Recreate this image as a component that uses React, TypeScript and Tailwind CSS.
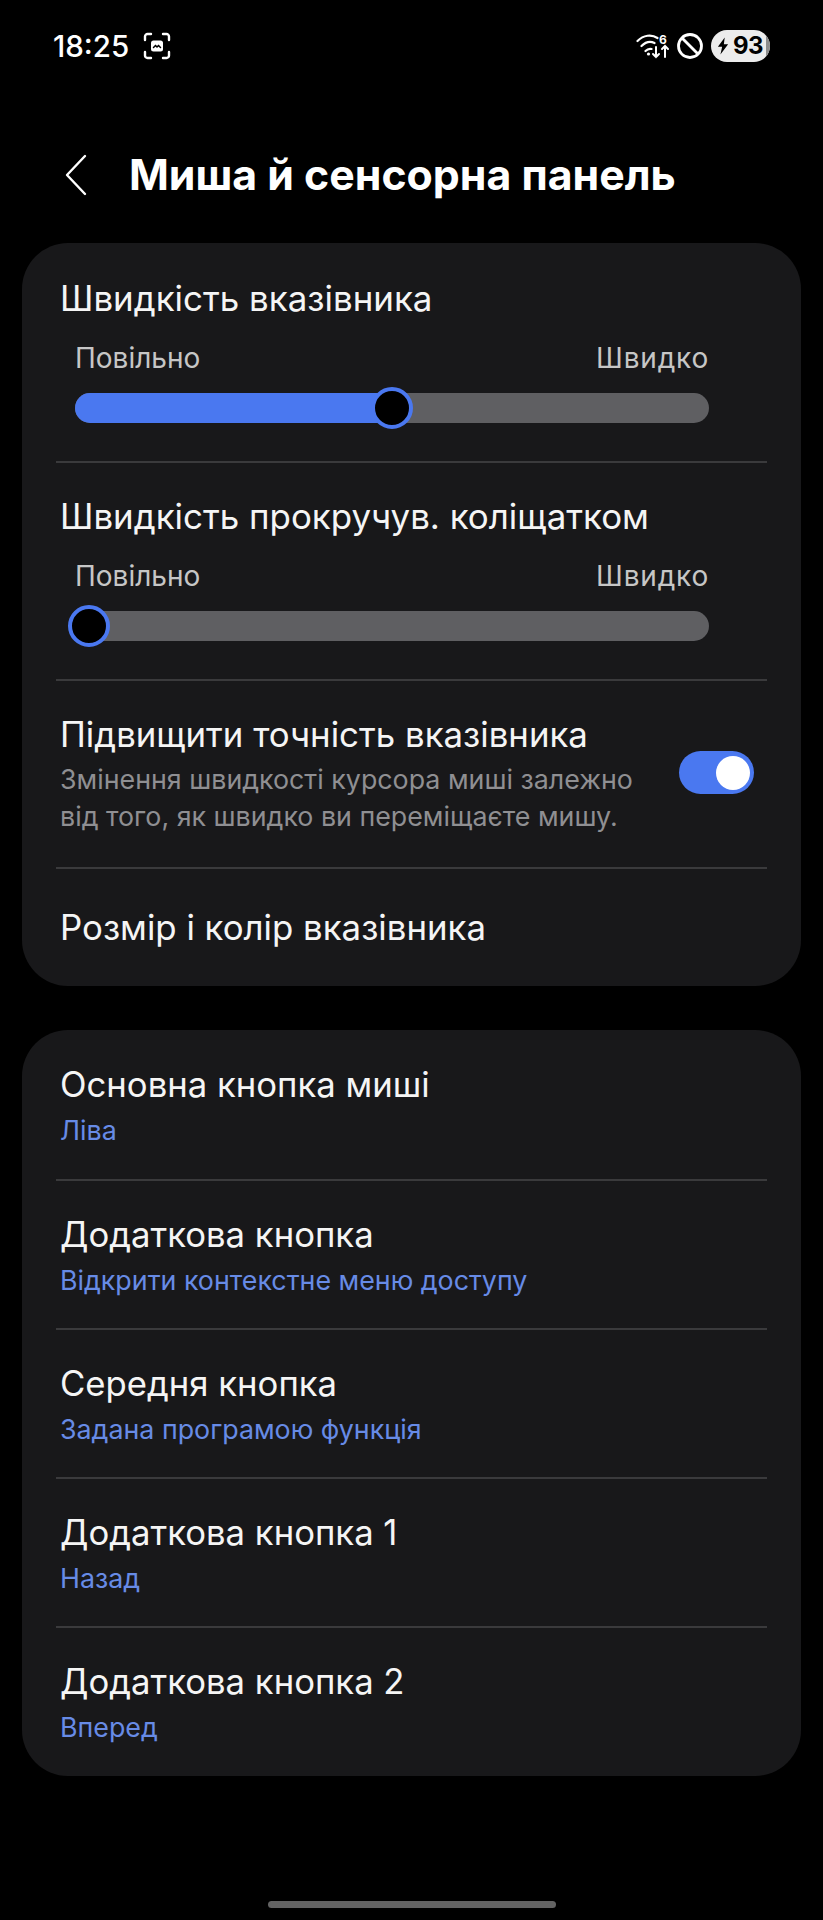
const sans = "font-['Inter','Liberation_Sans',sans-serif]";

function SliderRow({ title, percent, first }: { title: string; percent: number; first?: boolean }) {
  return (
    <div className={first ? "h-[218px] pt-[35px] pl-[38px]" : "h-[216px] pt-[33px] pl-[38px]"}>
      <div className="text-[34.9px] leading-[40px] text-[#f5f5f5]">{title}</div>
      <div className="mt-[22px] w-[649px] pl-[15px] flex justify-between text-[28px] leading-[36px] text-[#c6c6c6]">
        <span>Повільно</span>
        <span className="tracking-[0.8px]">Швидко</span>
      </div>
      <div className="relative mt-[17px] ml-[15px] w-[634px] h-[30px] rounded-full bg-[#5f5f62]">
        <div className="h-full rounded-full bg-[#4a78f0]" style={{ width: `${percent}%` }} />
        <div
          className="absolute top-[-6px] w-[42px] h-[42px] -ml-[21px] rounded-full bg-black border-[4px] border-[#4a78f0]"
          style={{ left: `${percent}%` }}
        />
      </div>
    </div>
  );
}

function Divider() {
  return <div className="mx-[34px] h-[2px] bg-[#3a3a3c]" />;
}

function ValueRow({ title, value, first }: { title: string; value: string; first?: boolean }) {
  return (
    <div className={first ? "h-[149px] px-[38px] pt-[34px]" : "h-[147px] px-[38px] pt-[33px]"}>
      <div className="text-[34.7px] leading-[40px] text-[#f5f5f5]">{title}</div>
      <div className={first ? "mt-[9px] text-[26.8px] leading-[34px] text-[#678be6]" : "mt-[9px] text-[26.8px] leading-[34px] text-[#678be6]"}>{value}</div>
    </div>
  );
}

export default function App() {
  return (
    <div className={`${sans} w-[823px] h-[1920px] bg-black overflow-hidden relative`}>
      <div className="h-[90px] pt-[28px] pl-[53px] pr-[53px] flex items-start justify-between text-white">
        <div className="flex items-center gap-[14px]">
          <span className="text-[29.5px] leading-[36px] font-medium">18:25</span>
          <svg width="28" height="28" viewBox="0 0 28 28" fill="none" stroke="white" strokeWidth="2.4" strokeLinecap="round">
            <path d="M2 8V4.5A2.5 2.5 0 0 1 4.5 2H8M20 2h3.5A2.5 2.5 0 0 1 26 4.5V8M26 20v3.5a2.5 2.5 0 0 1-2.5 2.5H20M8 26H4.5A2.5 2.5 0 0 1 2 23.500V20" />
            <rect x="8" y="8.500" width="12" height="11" rx="2.500" fill="white" stroke="none" />
            <path d="M10.500 15.500l2-2 1.500 1.500 1.500-1.500 2 2" stroke="black" strokeWidth="1.500" />
          </svg>
        </div>
        <div className="flex items-center gap-[6px] h-[36px]">
          <svg width="34" height="26" viewBox="0 0 34 26" fill="none" stroke="white" strokeWidth="2.200" strokeLinecap="round">
            <path d="M1.500 8c6-6 14-7 20-3M5.500 13c4-4 9-5 13-3M9.500 18c2-2 4-2.500 6-2" />
            <circle cx="12.500" cy="21" r="1.600" fill="white" stroke="none" />
            <path d="M20 14v10m-3-3 3 3 3-3M29 24V13m-3 3 3-3 3 3" strokeWidth="2" />
            <text x="23" y="11" fontSize="12" fontWeight="700" fill="white" stroke="none">6</text>
          </svg>
          <svg width="28" height="28" viewBox="0 0 28 28" fill="none" stroke="white" strokeWidth="2.800">
            <circle cx="14" cy="14" r="11.500" />
            <path d="M6 6l16 16" />
          </svg>
          <div className="ml-[1px] w-[59px] h-[32px] rounded-full bg-[#ececec] flex items-center pl-[6px] gap-[4px] text-black overflow-hidden relative">
            <svg width="12" height="20" viewBox="0 0 14 20" fill="black">
              <path d="M9 0 1 11h5l-2 9 9-12H8z" />
            </svg>
            <span className="relative z-10 text-[24px] leading-[30px] font-bold tracking-[-0.5px]">93</span>
            <div className="absolute right-0 top-0 w-[4px] h-full bg-[#8e8e8e]" />
          </div>
        </div>
      </div>
      <div className="h-[153px] pl-[65px] pt-[62px] flex items-start">
        <svg width="22" height="42" viewBox="0 0 22 42" fill="none" stroke="white" strokeWidth="2.400" strokeLinecap="round" strokeLinejoin="round" className="mt-[2px]">
          <path d="M20 2 2 21l18 19" />
        </svg>
        <h1 className="ml-[42px] text-[42.8px] leading-[46px] font-bold text-white">Миша й сенсорна панель</h1>
      </div>
      <div className="mx-[22px] h-[743px] rounded-[46px] bg-[#18181a] overflow-hidden">
        <SliderRow first title="Швидкість вказівника" percent={50} />
        <Divider />
        <SliderRow title="Швидкість прокручув. коліщатком" percent={2.200} />
        <Divider />
        <div className="h-[186px] pl-[38px] pr-[47px] pt-[33px] flex justify-between">
          <div>
            <div className="text-[34.8px] leading-[40px] text-[#f5f5f5]">Підвищити точність вказівника</div>
            <div className="mt-[7px] text-[26.8px] leading-[37px] text-[#8f8f92]">
              Змінення швидкості курсора миші залежно
              <br />
              від того, як швидко ви переміщаєте мишу.
            </div>
          </div>
          <div className="mt-[37px] w-[75px] h-[43px] rounded-full bg-[#4a78f0] flex items-center justify-end pr-[4px]">
            <div className="w-[34px] h-[34px] rounded-full bg-white" />
          </div>
        </div>
        <Divider />
        <div className="h-[117px] px-[38px] flex items-center text-[34.8px] text-[#f5f5f5]">Розмір і колір вказівника</div>
      </div>
      <div className="mt-[44px] mx-[22px] h-[746px] rounded-[46px] bg-[#18181a] overflow-hidden">
        <ValueRow first title="Основна кнопка миші" value="Ліва" />
        <Divider />
        <ValueRow title="Додаткова кнопка" value="Відкрити контекстне меню доступу" />
        <Divider />
        <ValueRow title="Середня кнопка" value="Задана програмою функція" />
        <Divider />
        <ValueRow title="Додаткова кнопка 1" value="Назад" />
        <Divider />
        <ValueRow title="Додаткова кнопка 2" value="Вперед" />
      </div>
      <div className="absolute left-[268px] top-[1901px] w-[288px] h-[7px] rounded-full bg-[#636363]" />
    </div>
  );
}
